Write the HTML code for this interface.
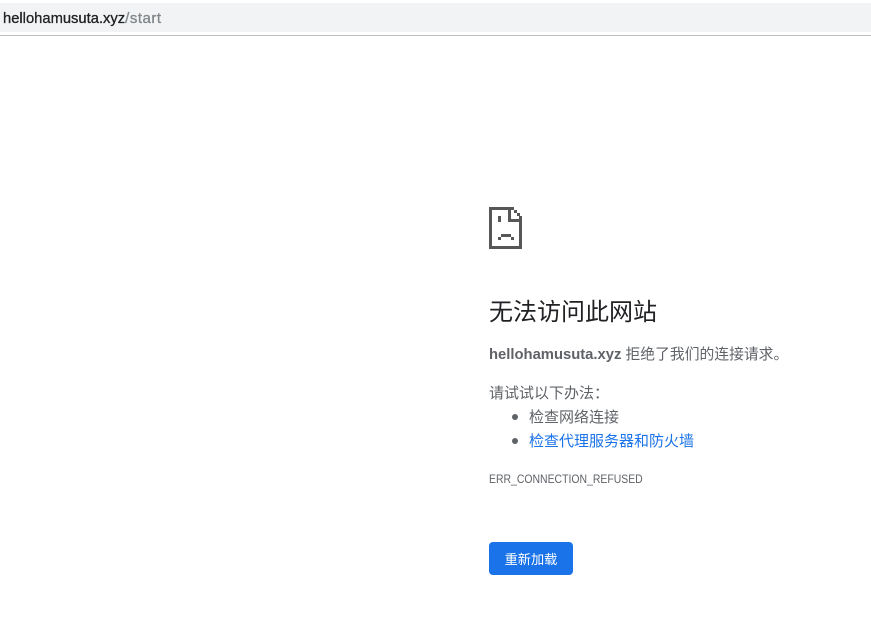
<!DOCTYPE html>
<html lang="zh-CN">
<head>
<meta charset="utf-8">
<title>hellohamusuta.xyz</title>
<style>
html,body{margin:0;padding:0;background:#fff;width:871px;height:644px;overflow:hidden}
body{position:relative;font-family:"Liberation Sans","Noto Sans CJK SC",sans-serif;color:#5f6368}
div,a,ul,li{position:absolute;white-space:nowrap}
.t{line-height:20px;font-size:15px}
#bar{left:0;top:3px;width:871px;height:29px;background:#f1f3f4}
#line{left:0;top:35px;width:871px;height:1px;background:#bdbdbd}
#url{left:3px;top:9px;font-size:15px;line-height:20px;color:#80868b;letter-spacing:.5px;-webkit-text-stroke:.3px #80868b}
#url span{color:#202124;font-size:14.75px;letter-spacing:0;-webkit-text-stroke:.3px #202124}
#h{left:489px;top:297px;font-size:24px;line-height:32px;color:#202124}
#btn{left:489px;top:542px;width:84px;height:33px;background:#1a73e8;border-radius:4px;color:#fff;font-size:13.2px;line-height:35px;text-align:center}
.dot{width:6px;height:6px;border-radius:3px;background:#5f6368;left:512px}
</style>
</head>
<body>
<div id="bar"></div>
<div id="line"></div>
<div id="url"><span>hellohamusuta.xyz</span>/start</div>

<svg style="position:absolute;left:489px;top:207px" width="33" height="42" viewBox="0 0 33 42" fill="#575757" shape-rendering="crispEdges">
<rect x="0" y="0" width="3" height="42"/>
<rect x="0" y="0" width="25" height="3"/>
<rect x="0" y="39" width="33" height="3"/>
<rect x="30" y="9" width="3" height="33"/>
<rect x="19" y="0" width="3" height="15"/>
<rect x="19" y="12" width="14" height="3"/>
<rect x="25" y="3" width="3" height="3"/>
<rect x="28" y="6" width="3" height="3"/>
<rect x="9" y="9" width="3" height="6"/>
<rect x="12" y="27" width="10" height="3"/>
<rect x="9" y="30" width="3" height="3"/>
<rect x="22" y="30" width="3" height="3"/>
</svg>

<div id="h">无法访问此网站</div>
<div class="t" style="left:489px;top:345px;font-size:14.8px"><b>hellohamusuta.xyz</b> 拒绝了我们的连接请求。</div>
<div class="t" style="left:489px;top:384px">请试试以下办法：</div>
<div class="dot" style="top:414px"></div>
<div class="t" style="left:529px;top:408px">检查网络连接</div>
<div class="dot" style="top:438px"></div>
<a class="t" style="left:529px;top:432px;color:#1a73e8">检查代理服务器和防火墙</a>
<div style="left:489px;top:471px;font-size:12px;line-height:16px;transform:scaleX(.87);transform-origin:0 0">ERR_CONNECTION_REFUSED</div>
<div id="btn">重新加载</div>
</body>
</html>
